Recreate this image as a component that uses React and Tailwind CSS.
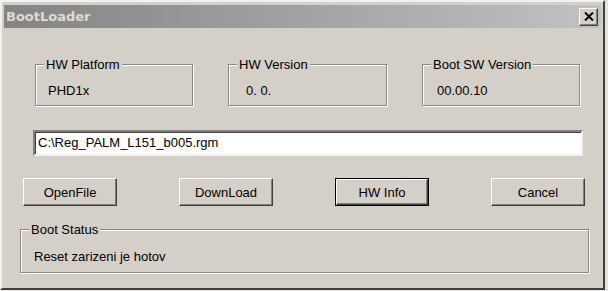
import React from "react";

const Group = ({ label, className = "", children }) => (
  <fieldset
    className={`border border-[#8a8884] shadow-[inset_1px_1px_0_#fff,1px_1px_0_#fff] ${className}`}
  >
    <legend className="ml-[8px] px-[2px] bg-[#d4d0c8] leading-[15px]">{label}</legend>
    {children}
  </fieldset>
);

const Button = ({ children, isDefault }) => (
  <button
    className={`w-[94px] h-[28px] bg-[#d4d0c8] ${
      isDefault ? "border border-black" : ""
    }`}
  >
    <div className="w-full h-full border-t border-l border-white border-r border-b border-r-[#404040] border-b-[#404040] shadow-[inset_-1px_-1px_0_#808080] flex items-center justify-center pt-[2px]">
      {children}
    </div>
  </button>
);

export default function App() {
  return (
    <div className="w-[608px] h-[291px] bg-[#e6e4e0] font-['Liberation_Sans',Arial,sans-serif] text-[13px] text-black">
      {/* window frame */}
      <div className="w-[605px] h-[290px] bg-[#d4d0c8] border-2 border-t-[#f2f1ee] border-l-[#f2f1ee] border-r-[#404040] border-b-[#404040] p-[2px] flex flex-col">
        {/* title bar */}
        <div className="h-[23px] mt-[1px] flex items-center justify-between pl-[2px] pr-[3px] bg-gradient-to-r from-[#848484] to-[#c2c2c2]">
          <span className="font-['DejaVu_Sans',Tahoma,sans-serif] font-bold text-[13px] text-[#dedbd5]">
            BootLoader
          </span>
          <div className="w-[19px] h-[18px] bg-[#d4d0c8] border-t border-l border-white border-r border-b border-r-[#404040] border-b-[#404040] shadow-[inset_-1px_-1px_0_#808080] flex items-center justify-center">
            <svg width="10" height="9" viewBox="0 0 10 9">
              <path d="M1 0.5 L9 8.5 M9 0.5 L1 8.5" stroke="#000" strokeWidth="2" />
            </svg>
          </div>
        </div>

        {/* info boxes */}
        <div className="flex gap-[35px] pl-[31px] mt-[29px]">
          <Group label="HW Platform" className="w-[158px] h-[49px]">
            <div className="pl-[12px] mt-[11px] leading-[15px]">PHD1x</div>
          </Group>
          <Group label="HW Version" className="w-[159px] h-[49px]">
            <div className="pl-[17px] mt-[11px] leading-[15px]">0. 0.</div>
          </Group>
          <Group label="Boot SW Version" className="w-[158px] h-[49px]">
            <div className="pl-[14px] mt-[11px] leading-[15px]">00.00.10</div>
          </Group>
        </div>

        {/* file path */}
        <div className="ml-[29px] mt-[24px] w-[550px] h-[26px] bg-white border-2 border-t-[#808080] border-l-[#808080] border-r-[#f2f1ee] border-b-[#f2f1ee] shadow-[inset_1px_1px_0_#404040] flex items-center pl-[3px]">
          C:\Reg_PALM_L151_b005.rgm
        </div>

        {/* buttons */}
        <div className="flex justify-between pl-[19px] pr-[16px] mt-[22px]">
          <Button>OpenFile</Button>
          <Button>DownLoad</Button>
          <Button isDefault>HW Info</Button>
          <Button>Cancel</Button>
        </div>

        {/* status */}
        <Group label="Boot Status" className="ml-[16px] mt-[16px] w-[569px] h-[51px]">
          <div className="pl-[13px] mt-[12px] leading-[15px]">Reset zarizeni je hotov</div>
        </Group>
      </div>
    </div>
  );
}
